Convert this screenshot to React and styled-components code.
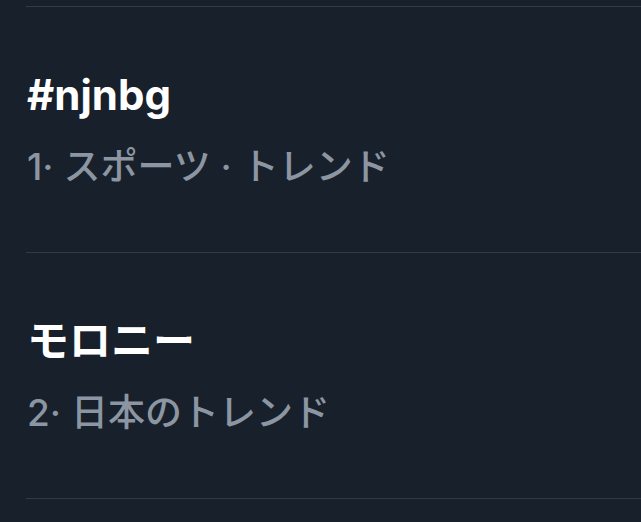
import React from "react";
import styled, { createGlobalStyle } from "styled-components";

const Global = createGlobalStyle`
  html, body { margin: 0; padding: 0; background: #18202b; }
  body { font-family: "Inter", "Noto Sans CJK JP", sans-serif; -webkit-font-smoothing: antialiased; }
`;

const Page = styled.div`
  width: 641px;
  height: 522px;
  overflow: hidden;
  background: #18202b;
  padding-top: 6px;
  box-sizing: border-box;
`;

const List = styled.div`
  margin-left: 26px;
  border-top: 1px solid #323a44;
`;

const Item = styled.div`
  display: flex;
  flex-direction: column;
  gap: 26px;
  height: 246px;
  box-sizing: border-box;
  padding: 64px 0 0 1px;
  border-bottom: 1px solid #323a44;
`;

const Title = styled.div`
  color: #ffffff;
  font-size: 42px;
  font-weight: 650;
  line-height: 48px;
`;

const Meta = styled.div`
  color: #8b96a2;
  font-size: 37px;
  font-weight: 500;
  line-height: 44px;
  white-space: nowrap;
`;

const trends = [
  { title: "#njnbg", meta: "1· スポーツ · トレンド" },
  { title: "モロニー", meta: "2· 日本のトレンド" },
];

export default function App() {
  return (
    <Page>
      <Global />
      <List>
        {trends.map((t) => (
          <Item key={t.title}>
            <Title>{t.title}</Title>
            <Meta>{t.meta}</Meta>
          </Item>
        ))}
      </List>
    </Page>
  );
}
